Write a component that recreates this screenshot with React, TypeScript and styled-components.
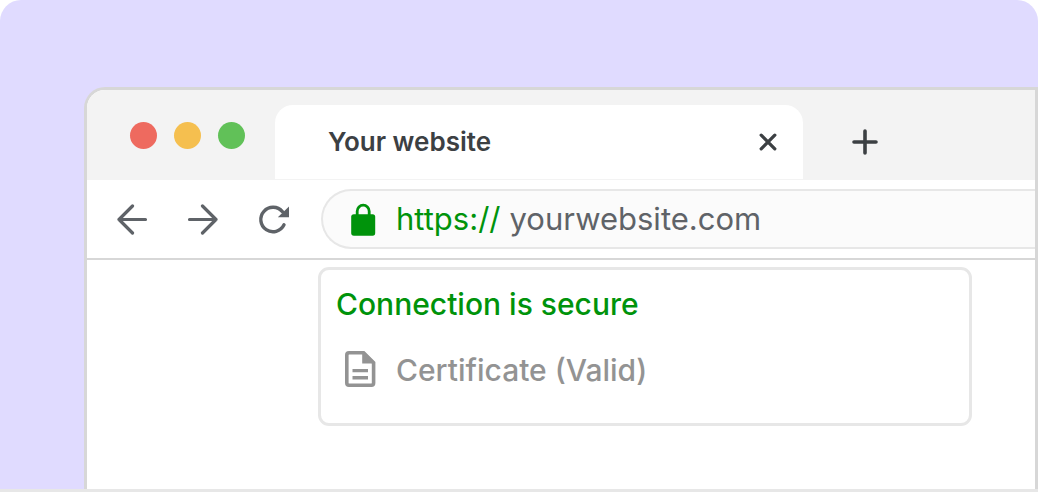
import React from "react";
import styled, { createGlobalStyle } from "styled-components";

const GlobalStyle = createGlobalStyle`
  *, *::before, *::after { box-sizing: border-box; }
  body { margin: 0; background: #fff; font-family: Inter, "Liberation Sans", sans-serif; }
  button { font: inherit; }
`;

const Page = styled.main`
  display: flex;
  flex-direction: column;
  min-height: 100vh;
  padding: 87px 0 0 84px;
  background: #e0dbff;
  border-bottom: 3px solid #e7e7e7;
  border-radius: 21px 21px 0 0;
`;

const BrowserWindow = styled.section`
  flex: 1;
  display: flex;
  flex-direction: column;
  overflow: hidden;
  background: #fff;
  border: 3px solid #d7d7d7;
  border-bottom: 0;
  border-radius: 21px 0 0 0;
`;

const TabBar = styled.header`
  display: flex;
  align-items: center;
  height: 90px;
  padding: 0 154px 0 43px;
  background-color: #f3f3f3;
`;

const WindowControls = styled.div`
  display: flex;
  gap: 17px;
  margin-right: 30px;
`;

const WindowControl = styled.button<{ $color: string }>`
  width: 27px;
  height: 27px;
  padding: 0;
  border: 0;
  border-radius: 50%;
  background: ${(p) => p.$color};
`;

const Tab = styled.div`
  flex: 1;
  align-self: flex-end;
  display: flex;
  align-items: center;
  justify-content: space-between;
  height: 75px;
  padding: 0 19px 0 53px;
  background: #fff;
  border-bottom: 1px solid #f3f3f3;
  border-radius: 18px 18px 0 0;
  color: #3c4043;
`;

const TabTitle = styled.span`
  font-size: 26px;
  font-weight: 600;
  line-height: 32px;
`;

const IconButton = styled.button`
  display: flex;
  align-items: center;
  justify-content: center;
  width: 32px;
  height: 32px;
  padding: 0;
  border: 0;
  background: none;
  color: #5f6368;
`;

const CloseTabButton = styled(IconButton)`
  color: #3c4043;
`;

const NewTabButton = styled(IconButton)`
  align-self: flex-end;
  margin: 0 0 22px 46px;
  color: #3c4043;
`;

const Toolbar = styled.nav`
  display: flex;
  align-items: center;
  height: 80px;
  padding-left: 29px;
  border-bottom: 2px solid #d7d7d7;
`;

const NavButtons = styled.div`
  display: flex;
  gap: 39px;
  margin-right: 31px;
`;

const AddressBar = styled.label`
  flex: 1;
  display: flex;
  align-items: center;
  height: 60px;
  padding-left: 28px;
  background: #fbfbfb;
  border: 2px solid #e7e7e7;
  border-right: 0;
  border-radius: 30px 0 0 30px;
  font-size: 31px;
  line-height: 36px;
  color: #5f6368;
`;

const Scheme = styled.span`
  margin: 0 9px 0 19px;
  color: #00930b;
`;

const AddressInput = styled.input`
  flex: 1;
  min-width: 0;
  padding: 0;
  border: 0;
  outline: 0;
  background: none;
  font: inherit;
  color: inherit;
`;

const SecurityCard = styled.aside`
  margin: 7px 63px 63px 231px;
  padding: 16px 15px 34px;
  border: 3px solid #e7e7e7;
  border-radius: 11px;
  background: #fff;
  font-size: 30px;
  line-height: 36px;
`;

const CardTitle = styled.h1`
  margin: 0 0 29px;
  font-size: inherit;
  font-weight: 500;
  color: #00930b;
`;

const CertificateRow = styled.div`
  display: flex;
  align-items: center;
  gap: 20px;
  padding-left: 9px;
  font-weight: 500;
  color: #939393;
`;

const CloseIcon = () => (
  <svg width="18" height="18" viewBox="0 0 18 18" fill="none" stroke="currentColor" strokeWidth="3.3" strokeLinecap="round">
    <path d="M2.2 2.2 15.8 15.8M15.8 2.2 2.2 15.8" />
  </svg>
);

const PlusIcon = () => (
  <svg width="26" height="26" viewBox="0 0 26 26" fill="none" stroke="currentColor" strokeWidth="3.6" strokeLinecap="round">
    <path d="M13 2V24M2 13H24" />
  </svg>
);

const BackIcon = () => (
  <svg width="32" height="32" viewBox="0 0 32 32" fill="none" stroke="currentColor" strokeWidth="3.2" strokeLinecap="round" strokeLinejoin="round">
    <path d="M29.5 16.5H3M16.5 3 3 16.5 16.5 30" />
  </svg>
);

const ForwardIcon = () => (
  <svg width="32" height="32" viewBox="0 0 32 32" fill="none" stroke="currentColor" strokeWidth="3.2" strokeLinecap="round" strokeLinejoin="round">
    <path d="M2.5 16.5H29M15.5 3 29 16.5 15.5 30" />
  </svg>
);

const ReloadIcon = () => (
  <svg width="32" height="32" viewBox="0 0 32 32" fill="none">
    <path d="M26 21.8A12.2 12.2 0 1 1 24.4 8.7" stroke="currentColor" strokeWidth="3.4" strokeLinecap="round" />
    <path d="M31 3.4V14.2H19.8Z" fill="currentColor" />
  </svg>
);

const LockIcon = () => (
  <svg width="26" height="34" viewBox="0 0 26 34" fill="none">
    <rect x="0.2" y="12.2" width="24" height="21.5" rx="2.6" fill="#00930b" />
    <path d="M6.2 13V9.2A6 6 0 0 1 18.2 9.2V13" stroke="#00930b" strokeWidth="2.8" />
  </svg>
);

const DocumentIcon = () => (
  <svg width="31" height="38" viewBox="0 0 31 38" fill="none">
    <path d="M4 1.8H18.6L28.6 11.8V32Q28.6 34.2 26.4 34.2H4Q1.8 34.2 1.8 32V4Q1.8 1.8 4 1.8Z" stroke="currentColor" strokeWidth="3.6" />
    <path d="M17.2 1H19.6L29.5 11V12.4H17.2Z" fill="currentColor" />
    <path d="M7.5 19.6H23M7.5 26.8H23" stroke="currentColor" strokeWidth="3.4" />
  </svg>
);

export default function App() {
  return (
    <>
      <GlobalStyle />
      <Page>
        <BrowserWindow>
          <TabBar>
            <WindowControls>
              <WindowControl $color="#ee6a5f" aria-label="Close window" />
              <WindowControl $color="#f5bf4f" aria-label="Minimize window" />
              <WindowControl $color="#61c158" aria-label="Maximize window" />
            </WindowControls>
            <Tab>
              <TabTitle>Your website</TabTitle>
              <CloseTabButton aria-label="Close tab">
                <CloseIcon />
              </CloseTabButton>
            </Tab>
            <NewTabButton aria-label="New tab">
              <PlusIcon />
            </NewTabButton>
          </TabBar>
          <Toolbar>
            <NavButtons>
              <IconButton aria-label="Back">
                <BackIcon />
              </IconButton>
              <IconButton aria-label="Forward">
                <ForwardIcon />
              </IconButton>
              <IconButton aria-label="Reload">
                <ReloadIcon />
              </IconButton>
            </NavButtons>
            <AddressBar>
              <LockIcon />
              <Scheme>https://</Scheme>
              <AddressInput type="text" aria-label="Address" defaultValue="yourwebsite.com" />
            </AddressBar>
          </Toolbar>
          <SecurityCard>
            <CardTitle>Connection is secure</CardTitle>
            <CertificateRow>
              <DocumentIcon />
              Certificate (Valid)
            </CertificateRow>
          </SecurityCard>
        </BrowserWindow>
      </Page>
    </>
  );
}
